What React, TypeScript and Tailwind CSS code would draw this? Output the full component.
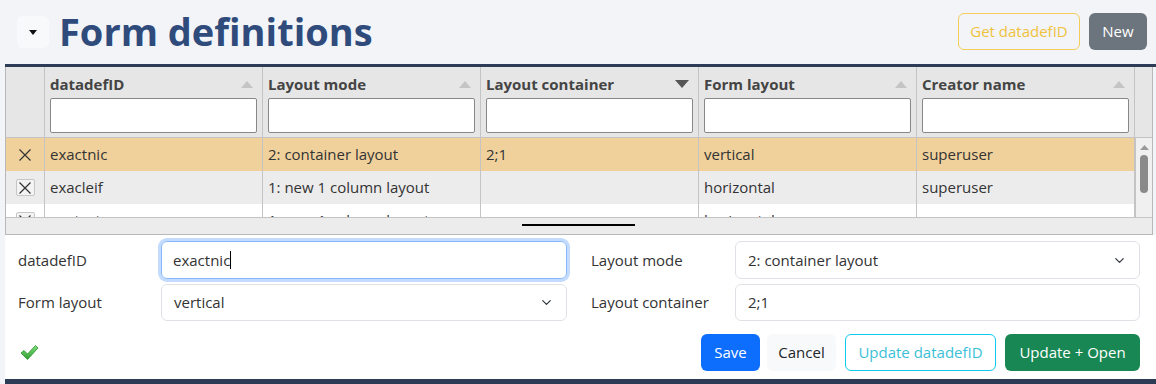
import { ChevronDown } from 'lucide-react';

const columns = [
  { key: 'id', title: 'datadefID', sort: 'up' },
  { key: 'mode', title: 'Layout mode', sort: 'up' },
  { key: 'container', title: 'Layout container', sort: 'down' },
  { key: 'form', title: 'Form layout', sort: 'up' },
  { key: 'creator', title: 'Creator name', sort: 'up' }
];

const rows = [
  { id: 'exactnic', mode: '2: container layout', container: '2;1', form: 'vertical', creator: 'superuser', selected: true },
  { id: 'exacleif', mode: '1: new 1 column layout', container: '', form: 'horizontal', creator: 'superuser' },
  { id: 'exatest', mode: '1: new 1 column layout', container: '', form: 'horizontal', creator: '' }
];

const XMark = () => (
  <svg width="14" height="14" viewBox="0 0 14 14" fill="none" stroke="#333" strokeWidth="1.2">
    <path d="M1.5 1.5 L12.5 12.5 M12.5 1.5 L1.5 12.5" />
  </svg>
);

const SortArrow = ({ dir }: { dir: string }) => (
  dir === 'down' ? (
    <svg width="14" height="8" viewBox="0 0 14 8"><path d="M0 0 H14 L7 8 Z" fill="#555" /></svg>
  ) : (
    <svg width="12" height="7" viewBox="0 0 12 7"><path d="M6 0 L12 7 H0 Z" fill="#c4c4c4" /></svg>
  )
);

const App = () => {
  return (
    <div className="w-[1156px] h-[384px] overflow-hidden bg-[#f2f4f8] font-['Open_Sans',sans-serif] pl-[5px] flex flex-col text-[#333]">
      {/* header */}
      <div className="h-[64px] flex items-center justify-between pl-[12px] pr-[9px] shrink-0">
        <div className="flex items-center gap-[10px]">
          <button className="w-[32px] h-[32px] rounded-md bg-[#f8f9fb] flex items-center justify-center">
            <svg width="8" height="5" viewBox="0 0 8 5"><path d="M0 0 H8 L4 5 Z" fill="#111" /></svg>
          </button>
          <h1 className="text-[38px] leading-none font-bold text-[#2f4b7c] -mt-[2px]">Form definitions</h1>
        </div>
        <div className="flex items-center gap-[9px] -mt-[2px]">
          <button className="w-[122px] h-[37px] rounded-md border border-[#f3cd5a] text-[#f0c23c] text-[15px]">Get datadefID</button>
          <button className="w-[58px] h-[37px] rounded-md bg-[#6c757d] text-white text-[15px]">New</button>
        </div>
      </div>
      <div className="h-[3px] bg-[#2e3b57] shrink-0" />

      {/* grid */}
      <div className="w-[1148px] border-l border-r border-b border-[#b8b8b8] bg-white shrink-0">
        <div className="h-[70px] flex bg-[#e6e6e6]">
          <div className="w-[39px] border-r border-[#c4c4c4]" />
          {columns.map((c) => (
            <div key={c.key} className="w-[218px] border-r border-[#c4c4c4] px-[5px] pt-[7px] flex flex-col">
              <div className="flex items-center justify-between h-[20px] pr-[4px]">
                <span className="text-[15px] font-bold text-[#444]">{c.title}</span>
                <SortArrow dir={c.sort} />
              </div>
              <div className="mt-[4px] h-[35px] bg-white border border-[#888] rounded-[2px]" />
            </div>
          ))}
          <div className="flex-1" />
        </div>
        <div className="h-[80px] flex border-t border-[#c4c4c4] overflow-hidden">
          <div className="w-[1129px] flex flex-col">
            {rows.map((r, i) => (
              <div
                key={r.id}
                className={`h-[33px] shrink-0 flex text-[15px] ${r.selected ? 'bg-[#f0d19c]' : i === 1 ? 'bg-[#ececec]' : 'bg-white'}`}
              >
                <div className="w-[39px] border-r border-[#c4c4c4] flex items-center justify-center">
                  <div className={`w-[19px] h-[17px] flex items-center justify-center rounded-[2px] ${r.selected ? '' : 'border border-[#c6c6c6] bg-[#f4f4f4]'}`}>
                    <XMark />
                  </div>
                </div>
                {columns.map((c) => (
                  <div key={c.key} className="w-[218px] border-r border-[#c4c4c4] px-[5px] flex items-center">
                    {r[c.key as keyof typeof r]}
                  </div>
                ))}
              </div>
            ))}
          </div>
          <div className="flex-1 bg-[#f0f0f0] border-l border-[#c4c4c4] flex flex-col items-center pt-[7px]">
            <svg width="9" height="5" viewBox="0 0 9 5"><path d="M4.5 0 L9 5 H0 Z" fill="#9a9a9a" /></svg>
            <div className="mt-[5px] w-[8px] h-[38px] rounded-full bg-[#8a8a8a]" />
          </div>
        </div>
        <div className="h-[17px] bg-[#ececec] border-t border-[#c4c4c4] flex justify-center pt-[6px]">
          <div className="w-[113px] h-[2px] bg-black -ml-[2px]" />
        </div>
      </div>

      {/* form */}
      <div className="flex-1 bg-white pl-[13px] pr-[16px] pt-[6px] flex flex-col text-[15px] text-[#333]">
        <div className="grid grid-cols-2 gap-x-[24px] gap-y-[5px]">
          <div className="flex items-center">
            <label className="w-[143px]">datadefID</label>
            <div className="flex-1 h-[38px] rounded-md border border-[#86b7fe] ring-[3px] ring-[#c2dbfe] px-[11px] flex items-center">
              exactnic<span className="w-[1px] h-[18px] bg-black" />
            </div>
          </div>
          <div className="flex items-center">
            <label className="w-[144px]">Layout mode</label>
            <div className="flex-1 h-[38px] rounded-md border border-[#dee2e6] pl-[12px] pr-[12px] flex items-center justify-between">
              <span>2: container layout</span>
              <ChevronDown size={15} strokeWidth={2} color="#343a40" />
            </div>
          </div>
          <div className="flex items-center">
            <label className="w-[143px]">Form layout</label>
            <div className="flex-1 h-[37px] rounded-md border border-[#dee2e6] pl-[12px] pr-[12px] flex items-center justify-between">
              <span>vertical</span>
              <ChevronDown size={15} strokeWidth={2} color="#343a40" />
            </div>
          </div>
          <div className="flex items-center">
            <label className="w-[144px]">Layout container</label>
            <div className="flex-1 h-[37px] rounded-md border border-[#dee2e6] px-[12px] flex items-center">2;1</div>
          </div>
        </div>
        <div className="mt-[13px] flex items-center justify-between">
          <svg width="19" height="17" viewBox="0 0 19 17" className="ml-[2px]">
            <defs>
              <linearGradient id="chk" x1="0" y1="0" x2="0" y2="1">
                <stop offset="0" stopColor="#7ee07e" />
                <stop offset="1" stopColor="#2f9e2f" />
              </linearGradient>
            </defs>
            <path d="M1 9 L4 6.5 L7.5 10 L15.5 1.5 L18 4 L7.5 15.5 Z" fill="url(#chk)" stroke="#2a8f2a" strokeWidth="0.8" />
          </svg>
          <div className="flex items-center">
            <button className="w-[59px] h-[37px] rounded-md bg-[#0d6efd] text-white">Save</button>
            <button className="ml-[7px] w-[69px] h-[37px] rounded-md bg-[#f8f9fa] text-[#212529]">Cancel</button>
            <button className="ml-[9px] w-[151px] h-[37px] rounded-md border border-[#0dcaf0] text-[#3bbfd9]">Update datadefID</button>
            <button className="ml-[9px] w-[135px] h-[37px] rounded-md bg-[#198754] text-white">Update + Open</button>
          </div>
        </div>
      </div>
      <div className="h-[5px] bg-[#2e3b57] shrink-0" />
    </div>
  );
};

export default App;
